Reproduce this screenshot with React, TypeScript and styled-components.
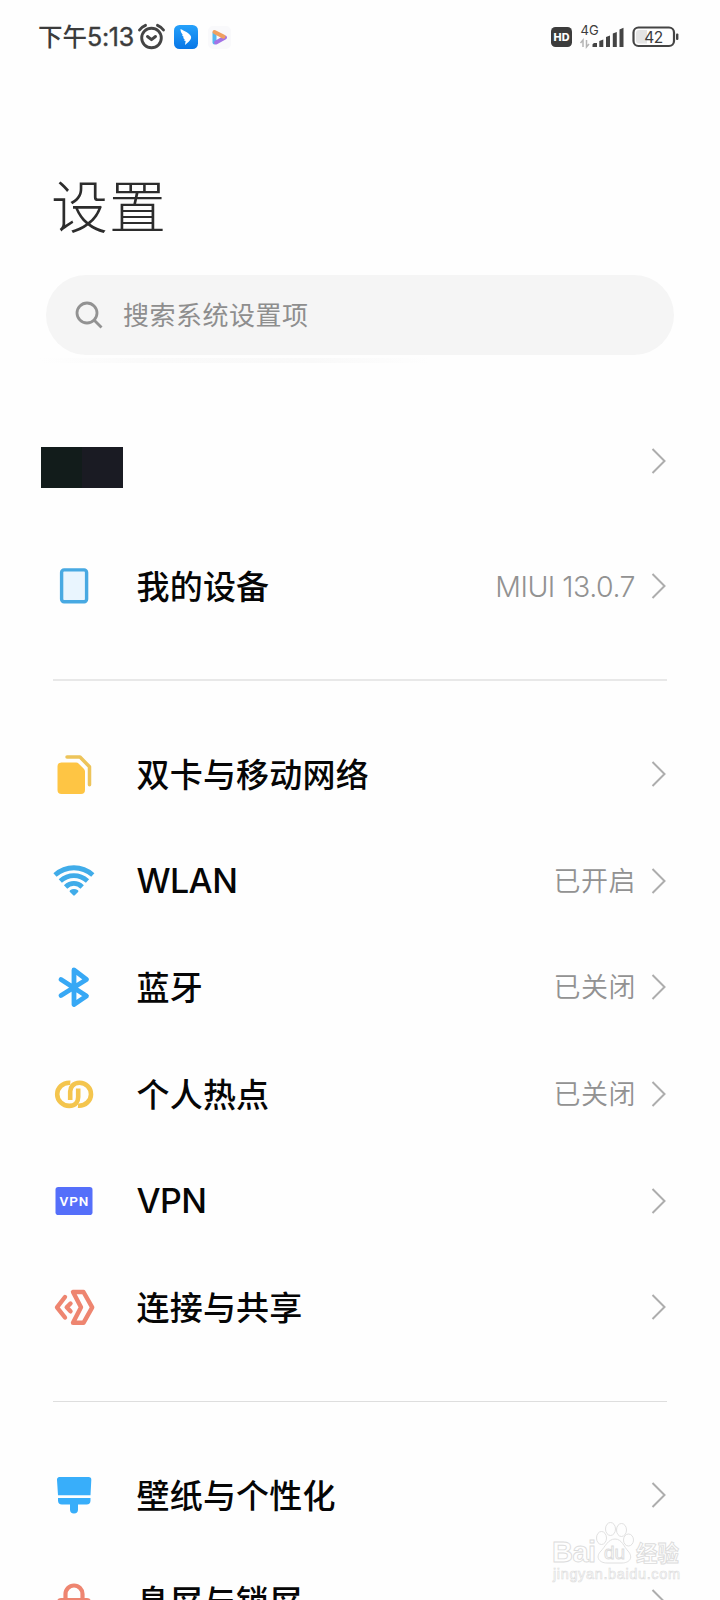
import React from "react";
import styled, { createGlobalStyle } from "styled-components";

const GlobalStyle = createGlobalStyle`
  * { box-sizing: border-box; }
  html, body { margin: 0; padding: 0; background: #fefefe; overflow: hidden; }
  body { font-family: "Noto Sans CJK SC", sans-serif; }
`;

const Screen = styled.main`
  position: relative;
  width: 720px;
  height: 1600px;
  overflow: hidden;
  background: #fefefe;
`;

const StatusBar = styled.header`
  height: 74px;
  padding: 0 41px 0 38px;
  display: flex;
  align-items: center;
  justify-content: space-between;
  color: #3c3c3c;
`;

const StatusGroup = styled.div`
  display: flex;
  align-items: center;
`;

const Clock = styled.span`
  display: flex;
  align-items: center;
  font-size: 24.5px;
  font-weight: 500;
  line-height: 36px;
  padding-bottom: 3px;
  white-space: nowrap;
`;

const ClockDigits = styled.span`
  font-family: Inter, sans-serif;
  font-size: 25px;
  font-weight: 400;
  line-height: 36px;
  width: 51px;
  margin-top: 2px;
  letter-spacing: -0.3px;
  -webkit-text-stroke: 0.4px #3c3c3c;
`;

const StatusIcon = styled.svg<{ $gap?: number }>`
  flex: none;
  display: block;
  overflow: visible;
  margin-left: ${(p) => p.$gap ?? 0}px;
`;

const Title = styled.h1`
  margin: 87px 0 0 51px;
  height: 88px;
  font-size: 57px;
  line-height: 84px;
  font-weight: 300;
  letter-spacing: 1px;
  color: #2c2c2c;
`;

const SearchWrap = styled.div`
  height: 89px;
  margin: 26px 46px 0;
`;

const SearchBox = styled.div`
  height: 80px;
  border-radius: 40px;
  background: #f5f5f5;
  display: flex;
  align-items: center;
  padding-left: 29px;
`;

const SearchHint = styled.span`
  margin-left: 20px;
  padding-bottom: 3px;
  font-size: 26px;
  line-height: 40px;
  letter-spacing: 0.5px;
  color: #8e8e8e;
`;

const SearchShade = styled.div`
  width: 390px;
  height: 5px;
  margin-top: 3px;
  margin-left: -6px;
  background: linear-gradient(90deg, #fefefe, #fafafa 25%, #f9f9f9 70%, #fefefe);
`;

const AccountRow = styled.div`
  height: 107px;
  margin-top: 43px;
  padding: 0 54px 0 41px;
  display: flex;
  align-items: center;
  justify-content: space-between;
`;

const AccountMask = styled.div`
  width: 82px;
  height: 41px;
  margin-top: 13px;
  background: linear-gradient(90deg, #121c1b 0 50%, #1a1b23 50% 100%);
`;

const Section = styled.section<{ $top?: number }>`
  display: flex;
  flex-direction: column;
  margin-top: ${(p) => p.$top ?? 0}px;
`;

const Row = styled.div`
  height: 106.6px;
  flex: none;
  padding: 0 54px 0 53px;
  display: flex;
  align-items: center;
`;

const IconBox = styled.div`
  width: 42px;
  height: 44px;
  margin-right: 41.5px;
  flex: none;
  svg { display: block; }
`;

const Label = styled.span<{ $latin?: boolean }>`
  flex: 1;
  color: #060606;
  font-weight: 500;
  white-space: nowrap;
  line-height: 48px;
  padding-bottom: ${(p) => (p.$latin ? 0 : 3)}px;
  font-family: ${(p) => (p.$latin ? 'Inter, "Noto Sans CJK SC", sans-serif' : '"Noto Sans CJK SC", sans-serif')};
  font-size: ${(p) => (p.$latin ? 34 : 33)}px;
  letter-spacing: ${(p) => (p.$latin ? -0.6 : 0.2)}px;
`;

const Value = styled.span<{ $latin?: boolean }>`
  color: #929292;
  white-space: nowrap;
  line-height: 40px;
  margin-right: ${(p) => (p.$latin ? 16 : 15)}px;
  padding-bottom: ${(p) => (p.$latin ? 0 : 2)}px;
  padding-top: ${(p) => (p.$latin ? 1 : 0)}px;
  font-family: ${(p) => (p.$latin ? "Inter, sans-serif" : '"Noto Sans CJK SC", sans-serif')};
  font-size: ${(p) => (p.$latin ? 28.5 : 27)}px;
  letter-spacing: ${(p) => (p.$latin ? -0.5 : 0.5)}px;
  font-weight: ${(p) => (p.$latin ? 350 : 350)};
`;

const Divider = styled.hr<{ $thin?: boolean }>`
  height: ${(p) => (p.$thin ? 1 : 2)}px;
  margin: ${(p) => (p.$thin ? 40.4 : 39.4)}px 53px 40px;
  border: 0;
  background: ${(p) => (p.$thin ? "#dedede" : "#e8e8e8")};
`;

const Watermark = styled.svg`
  position: absolute;
  left: 545px;
  top: 1515px;
`;

const Chevron = () => (
  <svg width="15" height="26" viewBox="0 0 15 26" fill="none" stroke="#adadad" strokeWidth="2">
    <path d="M1.500 1 13.500 13 1.500 25" />
  </svg>
);

const icons: Record<string, React.ReactNode> = {
  device: (
    <rect x="8.600" y="5.900" width="25" height="31.800" rx="2.500" fill="#e9f5fe" stroke="#48a9e2" strokeWidth="3.400" />
  ),
  sim: (
    <>
      <path d="M8.500 10.500H23a4 4 0 0 1 2.800 1.200l5 5A4 4 0 0 1 32 19.500V38a4 4 0 0 1-4 4H8.500a4 4 0 0 1-4-4V14.500a4 4 0 0 1 4-4z" fill="#fec544" />
      <path d="M14 5H27l9.500 9.800v18" fill="none" stroke="#edc45a" strokeWidth="3.500" strokeLinecap="round" strokeLinejoin="round" />
    </>
  ),
  wifi: (
    <g fill="none" stroke="#40ace9" strokeWidth="4.800">
      <path d="M2 16C13 6.300 28.800 6.300 39.800 16" />
      <path d="M7.300 22C15.500 14.800 26.300 14.800 34.500 22" />
      <path d="M12.600 27.900C17.500 23.200 24.300 23.200 29.200 27.900" />
      <path d="M17.700 32.200q3.300-2.400 6.600 0L21 35.500z" fill="#40ace9" strokeWidth="2.200" strokeLinejoin="round" />
    </g>
  ),
  bluetooth: (
    <path d="M8 14.500 33.500 31 21 39.500V5L33.500 14.500 8 30.500" fill="none" stroke="#37a8f5" strokeWidth="4.800" strokeLinecap="round" strokeLinejoin="round" />
  ),
  hotspot: (
    <g fill="none" stroke="#f4c54e" strokeWidth="4.600">
      <path d="M17.300 10.800C9.500 10.300 4.200 16 4.200 22.200s5.300 11.700 12 11.700S25.200 29 25.200 25v-8.500" />
      <path d="M25 33.700C32.500 34.300 38 28.500 38 22.200S33 10.700 26.500 10.700 17.200 15.500 17.200 19.500V28" />
    </g>
  ),
  vpn: (
    <>
      <rect x="2.500" y="8" width="37" height="28" rx="2.800" fill="#556ffa" />
      <text x="21.400" y="26.900" textAnchor="middle" fill="#fff" fontFamily="Roboto, sans-serif" fontSize="13.500" fontWeight="600" letterSpacing="1">VPN</text>
    </>
  ),
  share: (
    <g fill="none" stroke="#ee8570" strokeWidth="4.400" strokeLinejoin="round" strokeLinecap="round">
      <path d="M12 12 4 22.300 12 32.500" />
      <path d="M17.500 18.500 13.700 22.300l3.800 4" />
      <path d="M20 7h10.500l8.700 15.300-8.700 15.500H20L28 22.300z" />
    </g>
  ),
  brush: (
    <g fill="#38aefa">
      <path d="M6.500 4h29a2.800 2.800 0 0 1 2.800 3L37.500 22.300H5L4 7a2.800 2.800 0 0 1 2.500-3z" />
      <path d="M5 25h32.500v2.500a4 4 0 0 1-4 4H25v5a4 4 0 0 1-8 0v-5H9a4 4 0 0 1-4-4z" />
    </g>
  ),
  lock: (
    <>
      <rect x="4" y="18" width="34" height="24" rx="4" fill="#ee8570" />
      <path d="M12.500 19v-5a8.500 8.500 0 0 1 17 0v5" fill="none" stroke="#ee8570" strokeWidth="4.200" />
    </>
  ),
};

type Item = { icon: string; label: string; value?: string; latin?: boolean; latinValue?: boolean };

const deviceItems: Item[] = [{ icon: "device", label: "我的设备", value: "MIUI 13.0.7", latinValue: true }];

const networkItems: Item[] = [
  { icon: "sim", label: "双卡与移动网络" },
  { icon: "wifi", label: "WLAN", value: "已开启", latin: true },
  { icon: "bluetooth", label: "蓝牙", value: "已关闭" },
  { icon: "hotspot", label: "个人热点", value: "已关闭" },
  { icon: "vpn", label: "VPN", latin: true },
  { icon: "share", label: "连接与共享" },
];

const displayItems: Item[] = [
  { icon: "brush", label: "壁纸与个性化" },
  { icon: "lock", label: "息屏与锁屏" },
];

const SettingsList = ({ items, top }: { items: Item[]; top?: number }) => (
  <Section $top={top}>
    {items.map((item) => (
      <Row key={item.label}>
        <IconBox>
          <svg width="42" height="44" viewBox="0 0 42 44">{icons[item.icon]}</svg>
        </IconBox>
        <Label $latin={item.latin}>{item.label}</Label>
        {item.value && <Value $latin={item.latinValue}>{item.value}</Value>}
        <Chevron />
      </Row>
    ))}
  </Section>
);

export default function App() {
  return (
    <>
      <GlobalStyle />
      <Screen>
        <StatusBar>
          <StatusGroup>
            <Clock>下午<ClockDigits>5:13</ClockDigits></Clock>
            <StatusIcon $gap={0} width="28" height="26" viewBox="0 0 28 26" fill="none" stroke="#444" strokeWidth="2.900">
              <circle cx="13.500" cy="14" r="9.800" />
              <path d="m9.500 12.500 4 3.200 4-3.200M1.500 6Q3.500 3 7.500 1.300M25.500 6Q23.500 3 19.500 1.300" strokeLinecap="round" strokeLinejoin="round" />
            </StatusIcon>
            <StatusIcon $gap={8} width="24" height="24" viewBox="0 0 24 24">
              <defs>
                <linearGradient id="app" x2="0" y2="1">
                  <stop stopColor="#25a1fb" />
                  <stop offset="1" stopColor="#0876e6" />
                </linearGradient>
              </defs>
              <rect width="24" height="24" rx="5.500" fill="url(#app)" />
              <path d="M6.500 4c4.500 2.200 9 4.200 10.500 7.500.6 2-.8 3.800-2.300 5.200L11 20l.6-4-1.800-.8 1-.8-1.900-1.600 1-.5-2-2.300.9-.2C7.300 8.200 6.500 6.500 6.500 4z" fill="#fff" />
            </StatusIcon>
            <StatusIcon $gap={10} width="23" height="23" viewBox="0 0 23 23" fill="none" strokeWidth="4" strokeLinejoin="round" strokeLinecap="round">
              <rect width="23" height="23" rx="5" fill="#f9f9fb" />
              <path d="M6.500 16.500V7" stroke="#55b8f0" />
              <path d="M17 11.500 8 16.500" stroke="#a273e6" />
              <path d="M6.500 6 15.500 10.600" stroke="#f0a060" />
            </StatusIcon>
          </StatusGroup>
          <StatusGroup>
            <StatusIcon width="21" height="20" viewBox="0 0 21 20">
              <rect width="21" height="20" rx="4.500" fill="#3c3c3c" />
              <text x="10.500" y="14" textAnchor="middle" fill="#fff" fontFamily="Inter, sans-serif" fontWeight="800" fontSize="10.800">HD</text>
            </StatusIcon>
            <StatusIcon $gap={8} width="45" height="28" viewBox="0 0 45 28">
              <text x="0.500" y="11.500" fill="#3c3c3c" fontFamily="Inter, sans-serif" fontSize="13">4G</text>
              <path d="M3 24v-7l-2.500 3M6.500 17v7l2.500-3" fill="none" stroke="#b5b5b5" strokeWidth="1.500" />
              <g fill="#444">
                <path d="M12.500 24v-2.500a2 2 0 0 1 2-1.500h2.500v4zM19.300 24v-6l4-1.600V24zM26 24V14l4-1.500V24zM32.800 24V10.500l4-1.500v15zM39.500 24V6.500l4-1.700V24z" />
              </g>
            </StatusIcon>
            <StatusIcon $gap={7} width="47" height="22" viewBox="0 0 47 22">
              <rect x="1.500" y="1.500" width="40.500" height="18.500" rx="5" fill="none" stroke="#444" strokeWidth="2.200" />
              <path d="M7 4h8v13.500H7a3 3 0 0 1-3-3V7a3 3 0 0 1 3-3z" fill="#e4e4e4" />
              <rect x="44" y="7.500" width="2.400" height="6.500" rx="1" fill="#444" />
              <text x="21.500" y="16.600" textAnchor="middle" fill="#3c3c3c" fontFamily="Inter, sans-serif" fontSize="15.500" letterSpacing="-.4">42</text>
            </StatusIcon>
          </StatusGroup>
        </StatusBar>
        <Title>设置</Title>
        <SearchWrap>
          <SearchBox>
            <svg width="28" height="28" viewBox="0 0 28 28" fill="none" stroke="#929292" strokeWidth="2.800">
              <circle cx="12" cy="12" r="10" />
              <path d="m19 19 7.500 7.500" />
            </svg>
            <SearchHint>搜索系统设置项</SearchHint>
          </SearchBox>
          <SearchShade />
        </SearchWrap>
        <AccountRow>
          <AccountMask />
          <Chevron />
        </AccountRow>
        <SettingsList items={deviceItems} top={19} />
        <Divider />
        <SettingsList items={networkItems} />
        <Divider $thin />
        <SettingsList items={displayItems} />
        <Watermark width="145" height="72" viewBox="0 0 145 72" fill="#fefefe" stroke="#dcdcdc" strokeWidth=".9">
          <text x="7" y="47" fontFamily="Liberation Sans, sans-serif" fontWeight="700" fontSize="29" textLength="44">Bai</text>
          <ellipse cx="56.500" cy="23" rx="5" ry="6.500" />
          <ellipse cx="65.500" cy="14" rx="5" ry="6.500" />
          <ellipse cx="76.500" cy="15" rx="5" ry="6.500" />
          <ellipse cx="83.500" cy="25" rx="5" ry="6" />
          <path d="M70 24c7 0 9 8 13 12 6 7 1 12-6 12H62c-8 0-12-6-6-12 4-4 7-12 14-12z" />
          <text x="59" y="44" fontFamily="Liberation Sans, sans-serif" fontWeight="400" fontSize="19">du</text>
          <text x="91" y="46" fontFamily="Noto Sans CJK SC, sans-serif" fontWeight="700" fontSize="21.500">经验</text>
          <text x="8" y="64" fontFamily="Liberation Sans, sans-serif" fontSize="14.500" strokeWidth=".6" textLength="127">jingyan.baidu.com</text>
        </Watermark>
      </Screen>
    </>
  );
}
